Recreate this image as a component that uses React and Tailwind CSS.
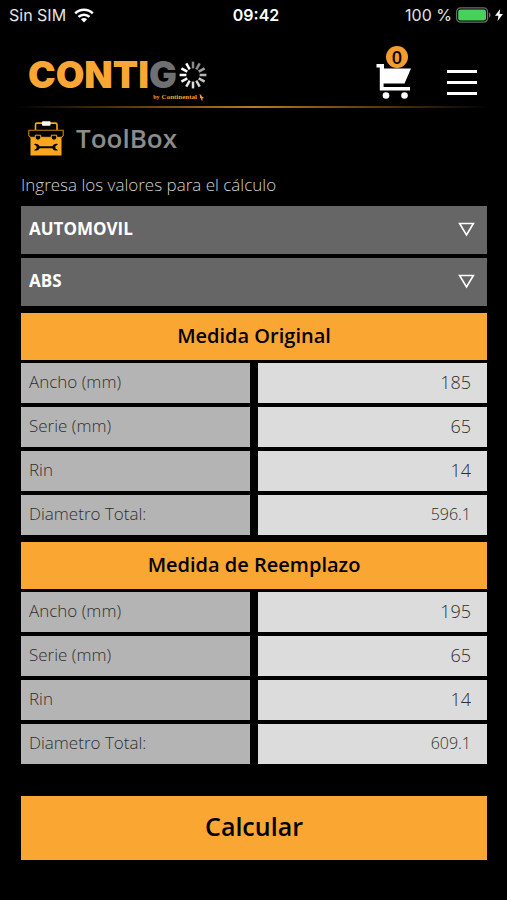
import React, { useState } from 'react';

const SPOKES = [
  { angle: 0, color: '#8a8a8a' },
  { angle: 30, color: '#8f8f8f' },
  { angle: 60, color: '#a0a0a0' },
  { angle: 90, color: '#b4b4b4' },
  { angle: 120, color: '#c4c4c4' },
  { angle: 150, color: '#d2d2d2' },
  { angle: 180, color: '#dedede' },
  { angle: 210, color: '#e8e8e8' },
  { angle: 240, color: '#f2f2f2' },
  { angle: 270, color: '#ffffff' },
  { angle: 300, color: '#ffffff' },
  { angle: 330, color: '#ffffff' },
];

const SECTIONS = [
  {
    id: 'original',
    title: 'Medida Original',
    values: { ancho: '185', serie: '65', rin: '14' },
    total: '596.1',
  },
  {
    id: 'reemplazo',
    title: 'Medida de Reemplazo',
    values: { ancho: '195', serie: '65', rin: '14' },
    total: '609.1',
  },
];

const FIELDS = [
  { name: 'ancho', label: 'Ancho (mm)' },
  { name: 'serie', label: 'Serie (mm)' },
  { name: 'rin', label: 'Rin' },
];

const StatusBar = () => (
  <div className="grid grid-cols-3 items-center h-[30px] pl-[9px] pr-1 font-['Inter',sans-serif] text-base text-[#e4e4e4]">
    <div className="flex items-center gap-2">
      <span>Sin SIM</span>
      <svg className="w-5 h-[15px]" viewBox="0 0 20 15" fill="none" stroke="#fff" strokeWidth="2.6">
        <path d="M1.2 5.4a12.6 12.6 0 0 1 17.6 0" />
        <path d="M4.6 8.9a7.8 7.8 0 0 1 10.8 0" />
        <path d="M10 14.4 6.9 11.3a4.4 4.4 0 0 1 6.2 0z" fill="#fff" stroke="none" />
      </svg>
    </div>
    <span className="text-center font-semibold text-white">09:42</span>
    <div className="flex items-center justify-end gap-1 whitespace-nowrap">
      <span>100 %</span>
      <svg className="w-[36px] h-4 shrink-0" viewBox="0 0 36 16">
        <rect x="0.6" y="0.8" width="31" height="14.4" rx="4" fill="none" stroke="#6d6d6d" strokeWidth="1.2" />
        <rect x="2.2" y="2.4" width="27.8" height="11.2" rx="2.4" fill="#45d15a" />
        <path d="M33 5.6a2.6 2.6 0 0 1 0 4.8z" fill="#6d6d6d" />
      </svg>
      <svg className="w-2 h-3 -ml-px shrink-0" viewBox="0 0 8 12">
        <path d="M5.2 0 0 6.8h3.4L2.6 12 8 5H4.5z" fill="#fff" />
      </svg>
    </div>
  </div>
);

const Logo = () => (
  <a href="#inicio" className="flex flex-col w-[180px]">
    <span className="flex items-center font-['Inter',sans-serif] font-black text-[37px] leading-9 text-[#faa634]">
      CONTI<span className="text-[#6f7072]">G</span>
      <svg className="w-7 h-7 ml-0.5 shrink-0" viewBox="-14 -14 28 28">
        {SPOKES.map(({ angle, color }) => (
          <line key={angle} x1="0" y1="-6.6" x2="0" y2="-13.4" stroke={color} strokeWidth="2.5" transform={`rotate(${angle})`} />
        ))}
      </svg>
    </span>
    <span className="flex items-center justify-end gap-0.5 pr-1 font-['Liberation_Serif',serif] font-bold text-[7px] leading-2 text-[#f0a030]">
      <span className="text-[6px]">by</span>
      <span>Continental</span>
      <svg className="w-[5px] h-[7px]" viewBox="0 0 5 7">
        <path d="M.4.2 2 .8l.8 1.6 1.8 1-.4 1-1 .2.4 2.2-1-.4-.6-2L.8 3.6 1 2z" fill="#f0a030" />
      </svg>
    </span>
  </a>
);

const CartButton = () => (
  <button type="button" aria-label="Carrito" className="relative w-9 h-[53px] flex items-end">
    <svg className="w-9 h-9" viewBox="0 0 36 36" fill="#fff">
      <path d="M.5 1H8v4.500h27L28.500 20.500H7.600v3.600H34v3.300H3.800V4.600H.5z" />
      <circle cx="10" cy="32.500" r="3.300" />
      <circle cx="28.500" cy="32.500" r="3.300" />
    </svg>
    <span className="absolute top-0 left-2.5 w-[22px] h-[22px] rounded-full bg-[#f49c2c] text-black font-['Open_Sans',sans-serif] font-semibold text-lg leading-[22px] text-center">
      0
    </span>
  </button>
);

const Header = () => (
  <header>
    <div className="flex items-start justify-between h-[76px] pl-7 pr-[30px]">
      <div className="pt-[27px]">
        <Logo />
      </div>
      <div className="flex items-end gap-[35px] pt-4">
        <CartButton />
        <button type="button" aria-label="Menú" className="flex flex-col gap-2 pb-1">
          <span className="w-[30px] h-[3px] bg-white" />
          <span className="w-[30px] h-[3px] bg-white" />
          <span className="w-[30px] h-[3px] bg-white" />
        </button>
      </div>
    </div>
    <div className="mx-4 h-0.5 bg-linear-to-r from-transparent via-[#b87a22] to-transparent" />
  </header>
);

const ToolboxIcon = () => (
  <svg className="w-9 h-[35px]" viewBox="0 0 36 35">
    <path d="M7.500 9V3.600a1.500 1.500 0 0 1 1.500-1.500h18.500a1.500 1.500 0 0 1 1.500 1.500V9" fill="none" stroke="#faa61e" strokeWidth="1.600" />
    <rect x="14" y="0.300" width="8.500" height="4.400" rx="0.800" fill="#fff" />
    <path d="M.8 9.200h34.400v5.400l-1.700 1.800h-31L.8 14.600z" fill="#000" stroke="#c98414" strokeWidth="1.100" />
    <path d="M2.500 16.500h31V34.500h-31z" fill="#faa61e" />
    <path d="M7.300 14.200h5.400v2.300a2.700 2.700 0 0 1-5.400 0zM23.300 14.200h5.400v2.300a2.700 2.700 0 0 1-5.400 0z" fill="#000" stroke="#faa61e" strokeWidth="1" />
    <path d="M6 23.200c2.300-1 4.800 0 5.600 2h12.800c.8-2 3.300-3 5.600-2l-2.600 2v2l2.600 2c-2.300 1-4.800 0-5.600-2H11.600c-.8 2-3.300 3-5.600 2l2.600-2v-2z" fill="#000" />
  </svg>
);

const SelectBox = ({ label, options }) => (
  <div className="relative">
    <select
      aria-label={label}
      className="block w-full h-12 pl-2 pr-10 pb-0.5 appearance-none bg-[#666] text-white text-[17px] font-bold"
    >
      {options.map((option) => (
        <option key={option}>{option}</option>
      ))}
    </select>
    <svg className="absolute right-3 top-4 w-[17px] h-[15px] pointer-events-none" viewBox="0 0 17 15">
      <path d="M1.600 1.500h13.800L8.500 13z" fill="none" stroke="#fff" strokeWidth="1.600" />
    </svg>
  </div>
);

const LABEL_CELL = 'h-10 px-2 pb-0.5 flex items-center bg-[#b4b4b4]';
const VALUE_CELL = 'h-10 w-full min-w-0 pl-2 pr-4 pb-0.5 bg-[#dcdcdc] text-right';

const MeasureSection = ({ id, title, values, total, onChange }) => (
  <section className="mt-[7px] text-[#2e2e2e] font-light">
    <h2 className="h-[47px] mb-[3px] pb-0.5 flex items-center justify-center bg-[#faa632] text-black text-xl font-semibold">
      {title}
    </h2>
    <div className="grid grid-cols-2 gap-x-2 gap-y-1">
      {FIELDS.map(({ name, label }) => (
        <React.Fragment key={name}>
          <label htmlFor={`${id}-${name}`} className={`${LABEL_CELL} text-[17px]`}>
            {label}
          </label>
          <input
            id={`${id}-${name}`}
            inputMode="numeric"
            className={`${VALUE_CELL} text-lg`}
            value={values[name]}
            onChange={(e) => onChange(id, name, e.target.value)}
          />
        </React.Fragment>
      ))}
      <label htmlFor={`${id}-total`} className={`${LABEL_CELL} text-[17px]`}>
        Diametro Total:
      </label>
      <output id={`${id}-total`} className={`${VALUE_CELL} flex items-center justify-end text-base`}>
        {total}
      </output>
    </div>
  </section>
);

const App = () => {
  const [sections, setSections] = useState(SECTIONS);

  const handleChange = (id, name, value) => {
    setSections((prev) =>
      prev.map((s) => (s.id === id ? { ...s, values: { ...s.values, [name]: value } } : s))
    );
  };

  return (
    <div className="min-h-screen bg-black font-['Open_Sans',sans-serif]">
      <StatusBar />
      <Header />
      <main className="pl-[21px] pr-5 pb-10">
        <div className="flex items-center gap-3 pt-3 pl-[7px] h-12">
          <ToolboxIcon />
          <h1 className="text-[26px] leading-8 font-semibold text-[#8c8c8c]">ToolBox</h1>
        </div>
        <p className="h-[50px] pt-[17px] text-[17px] leading-6 font-light text-[#d0d0d0]">
          Ingresa los valores para el cálculo
        </p>
        <form onSubmit={(e) => e.preventDefault()}>
          <div className="flex flex-col gap-1">
            <SelectBox label="Tipo de vehículo" options={['AUTOMOVIL', 'CAMIONETA']} />
            <SelectBox label="Sistema" options={['ABS', 'SIN ABS']} />
          </div>
          {sections.map((section) => (
            <MeasureSection key={section.id} {...section} onChange={handleChange} />
          ))}
          <button type="submit" className="mt-8 w-full h-16 pb-0.5 bg-[#faa632] text-black text-[25px] font-semibold">
            Calcular
          </button>
        </form>
      </main>
    </div>
  );
};

export default App;
